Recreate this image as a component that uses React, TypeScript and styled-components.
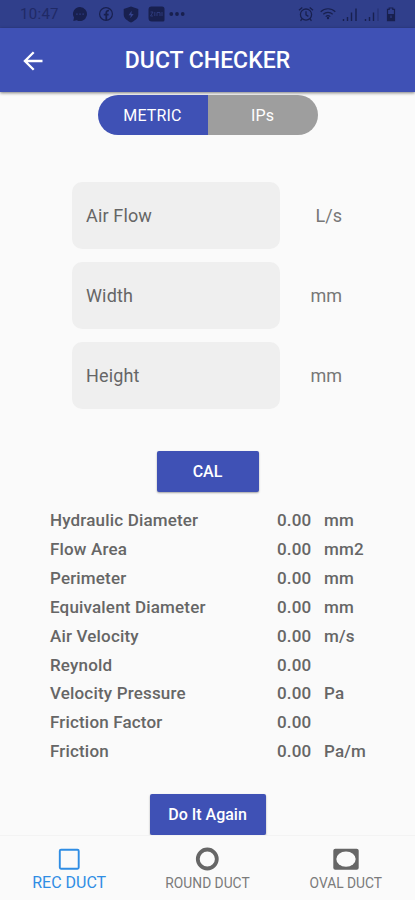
import React, { useState } from "react";
import styled, { createGlobalStyle } from "styled-components";

const GlobalStyle = createGlobalStyle`
  * { box-sizing: border-box; }
  body { margin: 0; background: #fafafa; }
  button, input { font: inherit; border: 0; padding: 0; margin: 0; }
`;

const Screen = styled.div`
  width: 415px;
  height: 900px;
  display: flex;
  flex-direction: column;
  overflow: hidden;
  background: #fafafa;
  color: #666;
  font-family: Roboto, "Liberation Sans", sans-serif;
`;

const StatusBar = styled.div`
  height: 28px;
  flex: none;
  display: flex;
  align-items: center;
  justify-content: space-between;
  padding: 0 19px 0 20px;
  background: #303f8b;
  color: #18204f;
`;

const StatusGroup = styled.div<{ $gap: number }>`
  display: flex;
  align-items: center;
  gap: ${(p) => p.$gap}px;
`;

const Clock = styled.span`
  width: 43px;
  font-size: 15px;
  letter-spacing: 0.3px;
  color: #202a66;
`;

const Header = styled.header`
  height: 64px;
  flex: none;
  display: grid;
  grid-template-columns: 65px 1fr 65px;
  align-items: center;
  padding-top: 2px;
  background: #3f51b5;
  color: #fff;
  box-shadow: 0 1px 3px rgba(0, 0, 0, 0.5);
`;

const BackButton = styled.button`
  display: flex;
  justify-content: center;
  background: none;
  color: inherit;
`;

const Title = styled.h1`
  margin: 0;
  text-align: center;
  font-size: 23px;
  font-weight: 500;
  line-height: 26px;
  white-space: nowrap;
`;

const Main = styled.main`
  flex: 1;
  display: flex;
  flex-direction: column;
  align-items: center;
  padding-top: 3px;
`;

const UnitToggle = styled.div`
  width: 220px;
  height: 40px;
  flex: none;
  display: flex;
  border-radius: 20px;
  overflow: hidden;
`;

const UnitOption = styled.button<{ $on: boolean }>`
  flex: 1;
  background: ${(p) => (p.$on ? "#3f51b5" : "#9e9e9e")};
  color: #fff;
  font-size: 16px;
  letter-spacing: 0.15px;
`;

const Fields = styled.div`
  width: 271px;
  margin: 46.5px 0 42px;
  display: flex;
  flex-direction: column;
  gap: 13px;
`;

const Field = styled.label`
  height: 67px;
  display: flex;
  align-items: center;
  justify-content: space-between;
  padding-right: 1px;
  font-size: 18px;
  color: #777;
`;

const FieldInput = styled.input`
  width: 208px;
  height: 67px;
  padding: 0 14px;
  border-radius: 10px;
  background: #efefef;
  color: #555;
  letter-spacing: 0.15px;
  outline: 0;
  &::placeholder { color: #666; opacity: 1; }
`;

const ActionButton = styled.button<{ $width: number }>`
  width: ${(p) => p.$width}px;
  height: 41px;
  flex: none;
  border-radius: 2px;
  background: #3f51b5;
  color: #fff;
  font-size: 16px;
  font-weight: 500;
  box-shadow: 0 1px 2px rgba(0, 0, 0, 0.35);
`;

const Results = styled.dl`
  width: 315px;
  margin: 14.5px 0 28px;
  display: grid;
  grid-template-columns: 227px 47px 1fr;
  grid-auto-rows: 28.85px;
  align-items: center;
  font-size: 17px;
  font-weight: 500;
`;

const ResultName = styled.dt`
  white-space: nowrap;
  letter-spacing: 0.17px;
`;

const ResultValue = styled.dd`
  margin: 0;
  letter-spacing: 0.15px;
`;

const TabBar = styled.nav`
  height: 65px;
  flex: none;
  display: grid;
  grid-template-columns: repeat(3, 1fr);
  background: #fafafa;
  border-top: 1px solid #f3f3f3;
`;

const Tab = styled.button<{ $on?: boolean }>`
  display: flex;
  flex-direction: column;
  align-items: center;
  padding-top: 11px;
  background: none;
  white-space: nowrap;
  color: ${(p) => (p.$on ? "#2f8de4" : "#7b7b7b")};
  font-size: ${(p) => (p.$on ? 16 : 13.8)}px;
  svg { height: 24px; }
`;

const TabLabel = styled.span`
  line-height: 24px;
`;

const ChatIcon = () => (
  <svg width="16" height="16" viewBox="0 0 16 16">
    <path d="M8 1a7 7 0 1 1-3.3 13.2L1.3 15l.7-3.4A7 7 0 0 1 8 1z" fill="currentColor" />
    <path d="M4.300 7.400h1.300v1.300H4.300zM7.400 7.400h1.300v1.300H7.400zM10.500 7.400h1.300v1.300h-1.300z" fill="#303f8b" />
  </svg>
);

const SocialIcon = () => (
  <svg width="16" height="16" viewBox="0 0 16 16" fill="none" stroke="currentColor">
    <circle cx="8" cy="8" r="6.400" strokeWidth="1.200" />
    <path d="M8.300 14V7c0-1.800.8-2.500 2.700-2.300M5.800 8.700h4.800" strokeWidth="1.800" />
  </svg>
);

const ShieldIcon = () => (
  <svg width="16" height="17" viewBox="0 0 16 17">
    <path d="M8 .5 15.300 3v5.500c0 4-4 6.500-7.300 8-3.300-1.500-7.300-4-7.300-8V3z" fill="currentColor" />
    <path d="M8.700 4.800 5.500 9.300h2.300l-.5 3L10.700 8H8.400z" fill="#35448f" />
  </svg>
);

const AppBadge = () => (
  <svg width="17" height="16" viewBox="0 0 17 16">
    <path d="M3.500.5h10.500a2.500 2.500 0 0 1 2.500 2.500v11a1.500 1.500 0 0 1-1.500 1.500H4A3.500 3.500 0 0 1 .5 12V3.500a3 3 0 0 1 3-3z" fill="currentColor" />
    <path d="M2.500 6h2.500l-2.500 4H5M6.800 6v4M9 10V6.500h3V10M14 6v4" stroke="#303d80" strokeWidth=".9" fill="none" />
  </svg>
);

const DotsIcon = () => (
  <svg width="16" height="16" viewBox="0 0 16 16" fill="currentColor">
    <circle cx="2.300" cy="8" r="1.900" /><circle cx="8" cy="8" r="1.900" /><circle cx="13.700" cy="8" r="1.900" />
  </svg>
);

const AlarmIcon = () => (
  <svg width="16" height="16" viewBox="0 0 16 16" fill="none" stroke="currentColor" strokeWidth="1.300">
    <circle cx="8" cy="8.600" r="5.600" />
    <path d="M8 5.300v3.600l2.400 1.500M1 4.300l3.300-2.800M15 4.300l-3.300-2.800M4 13l-1.500 1.700M12 13l1.500 1.700" />
  </svg>
);

const WifiIcon = () => (
  <svg width="16" height="16" viewBox="0 0 16 16" fill="none" stroke="currentColor" strokeWidth="1.200">
    <path d="M.7 5.700a10.500 10.500 0 0 1 14.600 0M3.300 8.300a6.700 6.700 0 0 1 9.400 0M5.700 10.600a3.400 3.400 0 0 1 4.600 0" />
    <circle cx="8" cy="12" r=".6" fill="currentColor" />
  </svg>
);

const SignalIcon = ({ faint = false }: { faint?: boolean }) => (
  <svg width="16" height="16" viewBox="0 0 16 16" fill="none" stroke="currentColor" strokeWidth="1.400">
    <path d="M1.500 13v2M5.500 11v4M9.500 6.500V15" />
    <path d="M14 2.500V15" opacity={faint ? 0.35 : 1} />
  </svg>
);

const BatteryIcon = () => (
  <svg width="10" height="15" viewBox="0 0 10 15">
    <path d="M3.200 1h3.600v1.300h1.700v11.400h-7V2.300h1.700z" fill="none" stroke="currentColor" strokeWidth="1.200" />
    <path d="M1.500 7h7v7h-7z" fill="currentColor" />
    <path d="M5 8.500v2.500" stroke="#303f8b" />
  </svg>
);

const BackIcon = () => (
  <svg width="22" height="22" viewBox="0 0 22 22" fill="none" stroke="currentColor" strokeWidth="2.300">
    <path d="M20.500 11H3M11.700 2.200 2.900 11l8.800 8.800" />
  </svg>
);

const SquareIcon = () => (
  <svg width="24" height="24" viewBox="0 0 24 24">
    <rect x="2.800" y="2.800" width="18.900" height="18.900" rx="1.200" fill="none" stroke="currentColor" strokeWidth="1.900" />
  </svg>
);

const RingIcon = () => (
  <svg width="24" height="24" viewBox="0 0 24 24">
    <circle cx="12.300" cy="12" r="9.500" fill="none" stroke="#666" strokeWidth="3.800" />
  </svg>
);

const OvalIcon = () => (
  <svg width="26" height="24" viewBox="0 0 26 24">
    <rect x=".3" y="1.700" width="25.400" height="21" rx="2" fill="#666" />
    <ellipse cx="13" cy="12.100" rx="9.700" ry="7.700" fill="#fafafa" />
  </svg>
);

const fields = [
  { name: "Air Flow", unit: "L/s" },
  { name: "Width", unit: "mm" },
  { name: "Height", unit: "mm" },
];

const results = [
  ["Hydraulic Diameter", "mm"],
  ["Flow Area", "mm2"],
  ["Perimeter", "mm"],
  ["Equivalent Diameter", "mm"],
  ["Air Velocity", "m/s"],
  ["Reynold", ""],
  ["Velocity Pressure", "Pa"],
  ["Friction Factor", ""],
  ["Friction", "Pa/m"],
];

export default function App() {
  const [metric, setMetric] = useState(true);
  return (
    <Screen>
      <GlobalStyle />
      <StatusBar>
        <StatusGroup $gap={9.3}>
          <Clock>10:47</Clock>
          <ChatIcon />
          <SocialIcon />
          <ShieldIcon />
          <StatusGroup $gap={4}><AppBadge /><DotsIcon /></StatusGroup>
        </StatusGroup>
        <StatusGroup $gap={6}>
          <AlarmIcon />
          <WifiIcon />
          <SignalIcon />
          <SignalIcon faint />
          <BatteryIcon />
        </StatusGroup>
      </StatusBar>
      <Header>
        <BackButton aria-label="Back"><BackIcon /></BackButton>
        <Title>DUCT CHECKER</Title>
      </Header>
      <Main>
        <UnitToggle>
          <UnitOption $on={metric} onClick={() => setMetric(true)}>METRIC</UnitOption>
          <UnitOption $on={!metric} onClick={() => setMetric(false)}>IPs</UnitOption>
        </UnitToggle>
        <Fields>
          {fields.map((f) => (
            <Field key={f.name}>
              <FieldInput placeholder={f.name} />
              {f.unit}
            </Field>
          ))}
        </Fields>
        <ActionButton $width={102}>CAL</ActionButton>
        <Results>
          {results.map(([name, unit]) => (
            <React.Fragment key={name}>
              <ResultName>{name}</ResultName>
              <ResultValue>0.00</ResultValue>
              <ResultValue>{unit}</ResultValue>
            </React.Fragment>
          ))}
        </Results>
        <ActionButton $width={116}>Do It Again</ActionButton>
      </Main>
      <TabBar>
        <Tab $on><SquareIcon /><TabLabel>REC DUCT</TabLabel></Tab>
        <Tab><RingIcon /><TabLabel>ROUND DUCT</TabLabel></Tab>
        <Tab><OvalIcon /><TabLabel>OVAL DUCT</TabLabel></Tab>
      </TabBar>
    </Screen>
  );
}
